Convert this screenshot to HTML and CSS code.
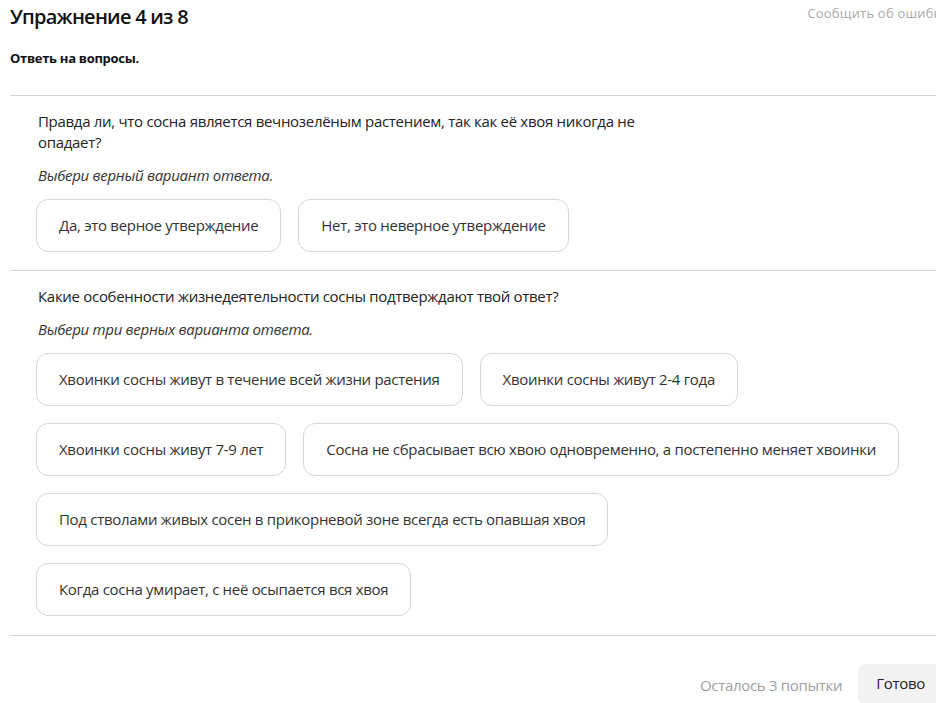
FILE: index.html
```html
<!DOCTYPE html>
<html lang="ru">
<head>
<meta charset="utf-8">
<title>Упражнение 4 из 8</title>
<link rel="stylesheet" href="styles.css">
</head>
<body>
<div class="page">
  <header class="head">
    <h1 class="title">Упражнение 4 из 8</h1>
    <a class="report">Сообщить об ошибке</a>
  </header>
  <p class="task">Ответь на вопросы.</p>

  <section class="question">
    <p class="q-text">Правда ли, что сосна является вечнозелёным растением, так как её хвоя никогда не опадает?</p>
    <p class="q-hint">Выбери верный вариант ответа.</p>
    <div class="options">
      <button class="opt">Да, это верное утверждение</button>
      <button class="opt">Нет, это неверное утверждение</button>
    </div>
  </section>

  <section class="question">
    <p class="q-text">Какие особенности жизнедеятельности сосны подтверждают твой ответ?</p>
    <p class="q-hint">Выбери три верных варианта ответа.</p>
    <div class="options">
      <button class="opt">Хвоинки сосны живут в течение всей жизни растения</button>
      <button class="opt">Хвоинки сосны живут 2-4 года</button>
      <button class="opt">Хвоинки сосны живут 7-9 лет</button>
      <button class="opt">Сосна не сбрасывает всю хвою одновременно, а постепенно меняет хвоинки</button>
      <button class="opt">Под стволами живых сосен в прикорневой зоне всегда есть опавшая хвоя</button>
      <button class="opt">Когда сосна умирает, с неё осыпается вся хвоя</button>
    </div>
  </section>

  <footer class="foot">
    <span class="tries">Осталось 3 попытки</span>
    <button class="done">Готово</button>
  </footer>
</div>
</body>
</html>
```

FILE: styles.css
```css
html, body {
  margin: 0;
  padding: 0;
  overflow: hidden;
  background: #fff;
}
body {
  font-family: "Open Sans", "Noto Sans", sans-serif;
  color: #222;
  letter-spacing: -0.3px;
}
.page {
  width: 938px;
  padding-left: 10px;
}
.head {
  display: flex;
  justify-content: space-between;
  align-items: flex-start;
  padding-top: 2px;
}
.title {
  margin: 0;
  font-size: 20px;
  font-weight: 600;
  line-height: 30px;
  letter-spacing: -0.75px;
  color: #111;
}
.report {
  font-size: 13px;
  line-height: 20px;
  letter-spacing: 0.2px;
  color: #aaa;
  padding-top: 1px;
  white-space: nowrap;
}
.task {
  margin: 17px 0 0;
  font-size: 13px;
  font-weight: 700;
  line-height: 18px;
  color: #111;
}
.question {
  margin-top: 28px;
  border-top: 1px solid #d4d4d4;
  padding: 15px 0 18px 26px;
}
.question + .question {
  margin-top: 0;
  padding-bottom: 19px;
}
.q-text {
  margin: 0 0 0 2px;
  max-width: 640px;
  font-size: 15px;
  line-height: 21px;
  color: #222;
}
.q-hint {
  margin: 12px 0 0 2px;
  font-size: 15px;
  font-style: italic;
  line-height: 21px;
  color: #333;
}
.options {
  display: flex;
  flex-wrap: wrap;
  gap: 17px 17px;
  margin-top: 13px;
  max-width: 890px;
}
.opt {
  font-family: inherit;
  font-size: 15px;
  line-height: 21px;
  letter-spacing: -0.3px;
  color: #333;
  background: #fff;
  border: 1px solid #d6d6d6;
  border-radius: 12px;
  padding: 15px 22px;
  cursor: pointer;
}
.foot {
  border-top: 1px solid #d4d4d4;
  display: flex;
  justify-content: flex-end;
  align-items: center;
  gap: 16px;
  padding-top: 28px;
  padding-right: 5px;
}
.tries {
  font-size: 15px;
  color: #a0a0a0;
}
.done {
  font-family: inherit;
  font-size: 15px;
  line-height: 21px;
  letter-spacing: -0.3px;
  color: #222;
  background: #f2f2f2;
  border: none;
  border-radius: 8px;
  padding: 9px 18px 11px;
}
```
